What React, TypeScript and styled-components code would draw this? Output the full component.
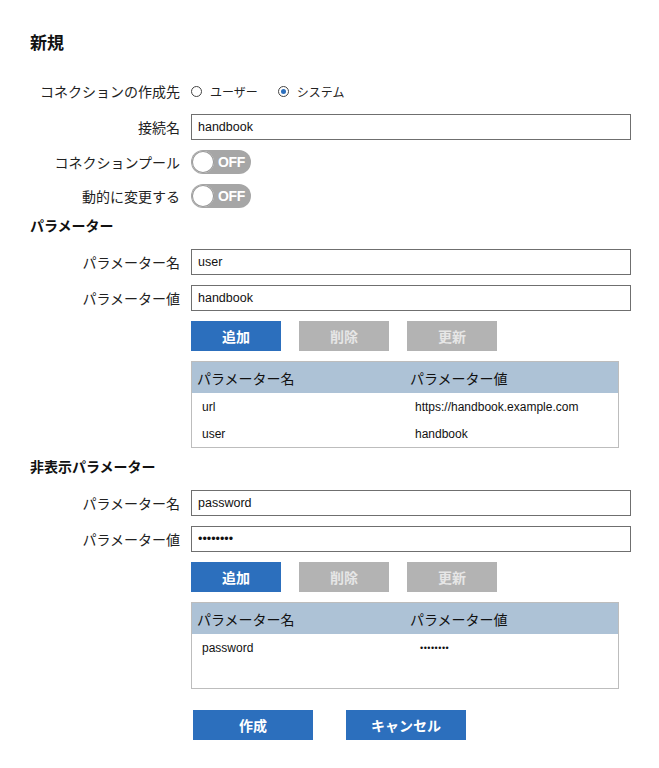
import styled, { createGlobalStyle } from "styled-components";

const GlobalStyle = createGlobalStyle`
  body {
    margin: 0;
    background: #ffffff;
    font-family: "Liberation Sans", "Noto Sans CJK JP", sans-serif;
    color: #111111;
  }
`;

const Page = styled.div`
  padding: 34px 0 20px 30px;
  width: 629px;
  box-sizing: border-box;
`;

const Title = styled.h1`
  margin: 0;
  font-size: 17px;
  line-height: 20px;
  font-weight: bold;
`;

const Heading = styled.h2<{ $top: number }>`
  margin: ${(p) => p.$top}px 0 0;
  font-size: 14px;
  line-height: 20px;
  font-weight: bold;
`;

const Form = styled.div<{ $top: number }>`
  display: flex;
  flex-direction: column;
  gap: 10px;
  margin-top: ${(p) => p.$top}px;
`;

const Row = styled.div<{ $h?: number }>`
  display: grid;
  grid-template-columns: 150px 440px;
  column-gap: 11px;
  align-items: center;
  min-height: ${(p) => p.$h ?? 26}px;
`;

const Label = styled.label`
  text-align: right;
  font-size: 14px;
  color: #222;
  white-space: nowrap;
`;

const Field = styled.div`
  display: flex;
  align-items: center;
`;

const TextInput = styled.input`
  width: 440px;
  height: 26px;
  box-sizing: border-box;
  border: 1px solid #6f6f6f;
  border-radius: 0;
  padding: 0 6px;
  font-family: "Liberation Sans", "Noto Sans CJK JP", sans-serif;
  font-size: 12.5px;
  color: #111;
  outline: none;
`;

const RadioGroup = styled.div`
  display: flex;
  align-items: center;
  gap: 20px;
`;

const RadioItem = styled.span`
  display: flex;
  align-items: center;
  gap: 8px;
  font-size: 12px;
  color: #222;
`;

const RadioDot = styled.span<{ $on?: boolean }>`
  width: 11px;
  height: 11px;
  box-sizing: border-box;
  border-radius: 50%;
  border: 1.5px solid #444;
  display: inline-flex;
  align-items: center;
  justify-content: center;
  &::after {
    content: "";
    width: 5px;
    height: 5px;
    border-radius: 50%;
    background: ${(p) => (p.$on ? "#2c6fbd" : "transparent")};
  }
`;

const Toggle = styled.span`
  position: relative;
  width: 60px;
  height: 24px;
  border-radius: 12px;
  background: #a6a6a6;
  display: inline-flex;
  align-items: center;
  justify-content: flex-end;
  padding-right: 6px;
  box-sizing: border-box;
  color: #ffffff;
  font-weight: bold;
  font-size: 14px;
  letter-spacing: -0.3px;
  &::before {
    content: "";
    position: absolute;
    left: 1px;
    top: 1px;
    width: 22px;
    height: 22px;
    border-radius: 50%;
    background: #ffffff;
    box-shadow: 0 0 0 1px #9a9a9a inset;
  }
`;

const Actions = styled.div<{ $top: number; $gap: number; $left: number }>`
  display: flex;
  gap: ${(p) => p.$gap}px;
  margin: ${(p) => p.$top}px 0 0 ${(p) => p.$left}px;
`;

const Button = styled.button<{ $disabled?: boolean; $w: number }>`
  width: ${(p) => p.$w}px;
  height: 30px;
  border: none;
  border-radius: 0;
  padding: 0;
  background: ${(p) => (p.$disabled ? "#b3b3b3" : "#2c6fbd")};
  color: ${(p) => (p.$disabled ? "#e6e6e6" : "#ffffff")};
  font-family: "Liberation Sans", "Noto Sans CJK JP", sans-serif;
  font-size: 14px;
  font-weight: bold;
  cursor: ${(p) => (p.$disabled ? "default" : "pointer")};
`;

const Table = styled.div<{ $bodyH: number }>`
  width: 428px;
  margin: 10px 0 0 161px;
  border: 1px solid #bdbdbd;
  box-sizing: border-box;
  display: grid;
  grid-template-rows: 31px ${(p) => p.$bodyH}px;
`;

const HeadRow = styled.div`
  display: grid;
  grid-template-columns: 1fr 1fr;
  align-items: center;
  background: #adc2d6;
  font-size: 14px;
  color: #111;
  & > span {
    padding-left: 5px;
  }
`;

const Body = styled.div`
  display: flex;
  flex-direction: column;
`;

const DataRow = styled.div`
  display: grid;
  grid-template-columns: 1fr 1fr;
  align-items: center;
  height: 28px;
  font-size: 12px;
  color: #111;
  & > span {
    padding-left: 10px;
  }
`;

const Masked = styled.span`
  font-size: 9px;
  letter-spacing: 0.5px;
  && {
    padding-left: 15px;
  }
`;

type Param = { name: string; value: string; masked?: boolean };

function ParamEditor({
  nameValue,
  valueValue,
  secret,
  rows,
  bodyH,
}: {
  nameValue: string;
  valueValue: string;
  secret?: boolean;
  rows: Param[];
  bodyH: number;
}) {
  return (
    <>
      <Form $top={13}>
        <Row>
          <Label>パラメーター名</Label>
          <Field>
            <TextInput defaultValue={nameValue} />
          </Field>
        </Row>
        <Row>
          <Label>パラメーター値</Label>
          <Field>
            <TextInput type={secret ? "password" : "text"} defaultValue={valueValue} />
          </Field>
        </Row>
      </Form>
      <Actions $top={10} $gap={18} $left={161}>
        <Button $w={90}>追加</Button>
        <Button $w={90} $disabled>
          削除
        </Button>
        <Button $w={90} $disabled>
          更新
        </Button>
      </Actions>
      <Table $bodyH={bodyH}>
        <HeadRow>
          <span>パラメーター名</span>
          <span>パラメーター値</span>
        </HeadRow>
        <Body>
          {rows.map((r) => (
            <DataRow key={r.name}>
              <span>{r.name}</span>
              {r.masked ? <Masked>{"•".repeat(8)}</Masked> : <span>{r.value}</span>}
            </DataRow>
          ))}
        </Body>
      </Table>
    </>
  );
}

export default function App() {
  return (
    <>
      <GlobalStyle />
      <Page>
        <Title>新規</Title>
        <Form $top={24}>
          <Row>
            <Label>コネクションの作成先</Label>
            <RadioGroup>
              <RadioItem>
                <RadioDot />
                ユーザー
              </RadioItem>
              <RadioItem>
                <RadioDot $on />
                システム
              </RadioItem>
            </RadioGroup>
          </Row>
          <Row>
            <Label>接続名</Label>
            <Field>
              <TextInput defaultValue="handbook" />
            </Field>
          </Row>
          <Row $h={24}>
            <Label>コネクションプール</Label>
            <Field>
              <Toggle>OFF</Toggle>
            </Field>
          </Row>
          <Row $h={24}>
            <Label>動的に変更する</Label>
            <Field>
              <Toggle>OFF</Toggle>
            </Field>
          </Row>
        </Form>

        <Heading $top={8}>パラメーター</Heading>
        <ParamEditor
          nameValue="user"
          valueValue="handbook"
          bodyH={54}
          rows={[
            { name: "url", value: "https://handbook.example.com" },
            { name: "user", value: "handbook" },
          ]}
        />

        <Heading $top={9}>非表示パラメーター</Heading>
        <ParamEditor
          nameValue="password"
          valueValue="password"
          secret
          bodyH={54}
          rows={[{ name: "password", value: "password", masked: true }]}
        />

        <Actions $top={21} $gap={33} $left={163}>
          <Button $w={120}>作成</Button>
          <Button $w={120}>キャンセル</Button>
        </Actions>
      </Page>
    </>
  );
}
